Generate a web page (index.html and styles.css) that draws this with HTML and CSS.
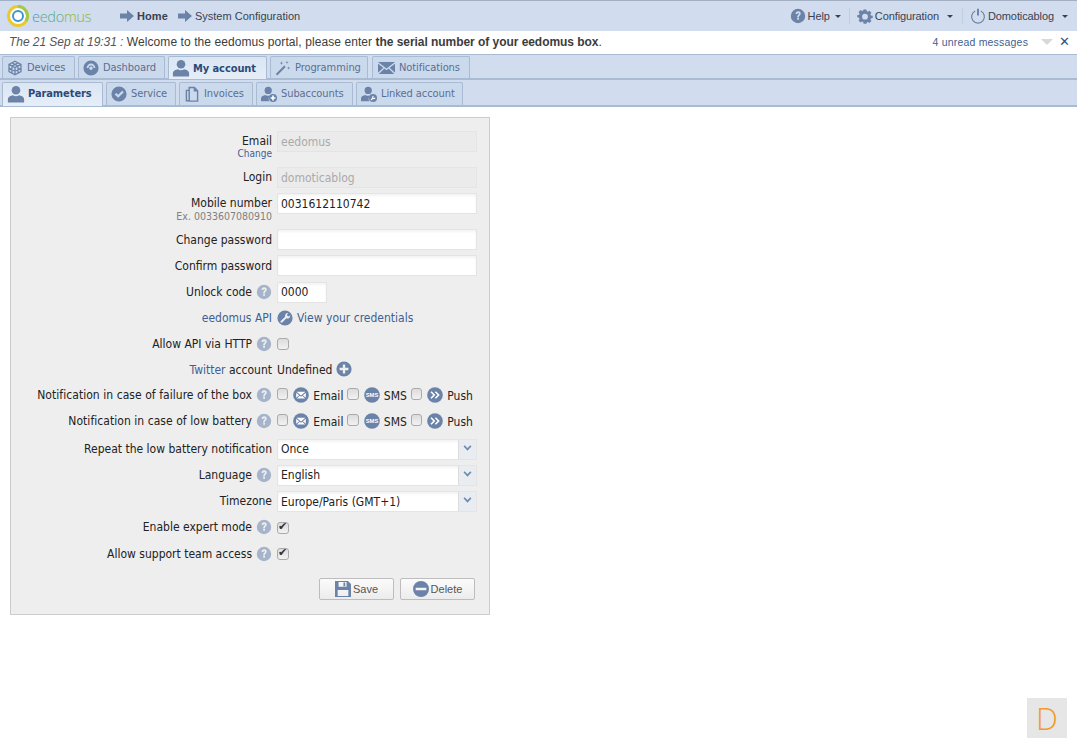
FILE: index.html
```html
<!DOCTYPE html>
<html lang="en">
<head>
  <meta charset="UTF-8">
  <title>eedomus - My account</title>
  <link rel="stylesheet" href="styles.css">
</head>
<body>
  <svg class="icon-defs" width="0" height="0">
    <symbol id="i-arrow" viewBox="0 0 14 12"><path d="M0 3.5h7V0l7 6-7 6V8.5H0z"/></symbol>
    <symbol id="i-help" viewBox="0 0 20 20"><path fill-rule="evenodd" d="M10 1a9 9 0 1 1 0 18 9 9 0 0 1 0-18zM7 7.6h2.2c.1-.9.4-1.3 1-1.3s.9.3.9.9c0 1.2-2.2 1.700-2.200 4.300h2.100c0-1.900 2.400-2.200 2.400-4.500 0-1.800-1.300-2.800-3.200-2.800C8.200 4.200 7 5.500 7 7.600zM9 12.300v2.300h2.200v-2.300z"/></symbol>
    <symbol id="i-gear" viewBox="0 0 20 20"><path fill-rule="evenodd" d="M8 1h4l.5 2.600 1.500.7 2.200-1.500 2.800 2.800-1.500 2.200.7 1.500 2.600.5v3l-2.600.7-.7 1.500 1.500 2.200-2.800 2.800-2.200-1.500-1.500.7L12 21H8l-.5-2.600-1.500-.7-2.200 1.500L1 16.400l1.500-2.200-.7-1.500L-.8 12V9l2.600-.5.700-1.500L1 4.600l2.800-2.800L6 3.300l1.500-.7zM10 7a4 4 0 1 0 0 8 4 4 0 0 0 0-8z" transform="translate(1 .9) scale(.9)"/></symbol>
    <symbol id="i-power" viewBox="0 0 20 20"><path fill="none" stroke="currentColor" stroke-width="1.500" d="M6.500 3.700a8 8 0 1 0 7 0"/><path d="M8.800 1h2.400v8.500H8.800z"/></symbol>
    <symbol id="i-cube" viewBox="0 0 20 20"><path fill="none" stroke="currentColor" stroke-width="1.600" d="M10 1.500l7.500 4v9l-7.500 4-7.500-4v-9zM2.500 5.500l7.500 4 7.500-4M10 9.500v9M6.200 3.500l7.500 4.100v9M13.800 3.500L6.200 7.600v9M2.500 10l7.500 4 7.500-4"/></symbol>
    <symbol id="i-dash" viewBox="0 0 20 20"><path fill-rule="evenodd" d="M10 .5a9.500 9.500 0 1 1 0 19 9.500 9.500 0 0 1 0-19zM10 4.500a5.500 5.500 0 0 0-5.500 5.500h2.300a3.200 3.200 0 0 1 6.400 0h2.300A5.500 5.500 0 0 0 10 4.500zM10 8a2.200 2.200 0 1 0 0 4.400A2.200 2.200 0 0 0 10 8z"/></symbol>
    <symbol id="i-person" viewBox="0 0 20 20"><circle cx="10" cy="5.800" r="4.800"/><path d="M1 19.500v-3.600c0-3 3-3.900 5.600-4.600 1 .8 2.100 1.200 3.400 1.200s2.400-.4 3.400-1.200c2.600.7 5.600 1.600 5.600 4.600v3.600z"/></symbol>
    <symbol id="i-wand" viewBox="0 0 20 20"><path d="M1 17.500L11.500 7l1.800 1.800L2.800 19.300z"/><path d="M8 1.500l.6 1.800 1.800.6-1.800.6L8 6.300l-.6-1.800-1.800-.6 1.800-.6zM15 1l.5 1.500L17 3l-1.500.5L15 5l-.5-1.500L13 3l1.500-.5zM17 8l.5 1.500 1.500.5-1.500.5L17 12l-.5-1.500L15 10l1.500-.5z"/></symbol>
    <symbol id="i-mail" viewBox="0 0 20 14"><path d="M0 0h20L10 7.500zM0 2v10.500L6.300 6.600zM20 2v10.500l-6.300-5.900zM7.500 7.500L10 9.500l2.500-2 6.500 6.500H1z"/></symbol>
    <symbol id="i-check" viewBox="0 0 20 20"><path fill-rule="evenodd" d="M10 .5a9.500 9.500 0 1 1 0 19 9.500 9.500 0 0 1 0-19zM14 5.800l-5 5.200-2.500-2.400-1.900 1.900L9 14.800l7-7.100z"/></symbol>
    <symbol id="i-pages" viewBox="0 0 20 20"><path fill="none" stroke="currentColor" stroke-width="1.800" d="M6.500 1.900H13l4 4v13H6.500zM13 2v4h4M6.500 5.500H3v13h3.500"/></symbol>
    <symbol id="i-person-plus" viewBox="0 0 20 20"><circle cx="9" cy="5.500" r="4.500"/><path d="M0 19v-3.500c0-2.800 3-3.700 5.500-4.300 1 .8 2.200 1.100 3.500 1.100s2.500-.3 3.500-1.100l1 .3c-2.400.5-4 2.500-4 4.500 0 1 .3 2.200 1 3z"/><circle cx="15" cy="15" r="5"/><path fill="#fff" d="M14 12h2v2h2v2h-2v2h-2v-2h-2v-2h2z"/></symbol>
    <symbol id="i-person-key" viewBox="0 0 20 20"><circle cx="9" cy="5.500" r="4.500"/><path d="M0 19v-3.500c0-2.800 3-3.700 5.500-4.300 1 .8 2.200 1.100 3.500 1.100s2.500-.3 3.500-1.100l1 .3c-2.400.5-4 2.500-4 4.500 0 1 .3 2.200 1 3z"/><circle cx="15" cy="15" r="5"/><path fill="none" stroke="#fff" stroke-width="1.500" d="M12.500 17.500l3-3M15.500 12.800a1.500 1.500 0 1 0 2 2"/></symbol>
    <symbol id="i-key" viewBox="0 0 20 20"><path fill-rule="evenodd" d="M10 .5a9.500 9.500 0 1 1 0 19 9.500 9.500 0 0 1 0-19zM13.500 3.800a3.500 3.500 0 0 0-3.300 4.600l-5.800 5.800v1.500h2.200l5-5.400a3.500 3.500 0 0 0 4.900-3.900L15 8.200l-2-.6-.5-2 1.800-1.700c-.3-.1-.5-.1-.8-.1z"/></symbol>
    <symbol id="i-plus" viewBox="0 0 20 20"><path fill-rule="evenodd" d="M10 .5a9.500 9.500 0 1 1 0 19 9.500 9.500 0 0 1 0-19zM8.500 4.500v4h-4v3h4v4h3v-4h4v-3h-4v-4z"/></symbol>
    <symbol id="i-circle-mail" viewBox="0 0 20 20"><circle cx="10" cy="10" r="9.800"/><path fill="#fff" d="M4.500 6h11L10 10.500zM4 7.300v6.200l3.700-3.200zM16 7.300v6.200l-3.700-3.200zM8.500 11l1.500 1.200 1.500-1.200 3.700 3.500H4.800z"/></symbol>
    <symbol id="i-circle-push" viewBox="0 0 20 20"><circle cx="10" cy="10" r="9.800"/><path fill="none" stroke="#fff" stroke-width="2" d="M5 6l4 4-4 4M10.500 6l4 4-4 4"/></symbol>
    <symbol id="i-save" viewBox="0 0 18 18"><path fill-rule="evenodd" d="M0 0h14.500L18 3.500V18H0zM4 1v5.500h9V1zM9.500 1.800h2v4h-2zM3 10v7h12v-7z"/></symbol>
    <symbol id="i-minus" viewBox="0 0 18 18"><path fill-rule="evenodd" d="M9 0a9 9 0 1 1 0 18A9 9 0 0 1 9 0zM3 7.500v3h12v-3z"/></symbol>
  </svg>

  <header class="topbar">
    <a class="logo">
      <svg class="logo-mark" viewBox="0 0 22 22" width="22" height="22">
        <circle cx="11" cy="11" r="9.500" fill="#fff" stroke="#e9c92c" stroke-width="3"/>
        <path d="M11 1.500a9.500 9.500 0 0 1 8 14.500" fill="none" stroke="#a3c94a" stroke-width="3"/>
        <circle cx="11" cy="11" r="5" fill="#fff" stroke="#3f95d4" stroke-width="2"/>
      </svg>
      <span class="logo-text"><span class="logo-e">e</span><span class="logo-d">edo</span><span class="logo-m">mus</span></span>
    </a>
    <nav class="crumbs">
      <svg class="ico-arrow"><use href="#i-arrow"/></svg>
      <b>Home</b>
      <svg class="ico-arrow arrow-next"><use href="#i-arrow"/></svg>
      <span>System Configuration</span>
    </nav>
    <div class="top-menu">
      <span class="menu-item"><svg class="ico-16"><use href="#i-help"/></svg>Help<i class="caret"></i></span>
      <span class="menu-item menu-config"><svg class="ico-16"><use href="#i-gear"/></svg>Configuration<i class="caret"></i></span>
      <span class="menu-item menu-user"><svg class="ico-16"><use href="#i-power"/></svg>Domoticablog<i class="caret"></i></span>
    </div>
  </header>

  <div class="msgbar">
    <p class="msg"><em>The 21 Sep at 19:31 :</em> Welcome to the eedomus portal, please enter <strong>the serial number of your eedomus box</strong>.</p>
    <a class="unread">4 unread messages</a>
    <i class="msg-down"></i>
    <span class="msg-close">✕</span>
  </div>

  <div class="tabs">
    <a class="tab tab-devices"><svg class="ico-16"><use href="#i-cube"/></svg>Devices</a>
    <a class="tab tab-dash"><svg class="ico-16"><use href="#i-dash"/></svg>Dashboard</a>
    <a class="tab tab-account active"><svg class="ico-18"><use href="#i-person"/></svg>My account</a>
    <a class="tab tab-prog"><svg class="ico-16"><use href="#i-wand"/></svg>Programming</a>
    <a class="tab tab-notif"><svg class="ico-mail"><use href="#i-mail"/></svg>Notifications</a>
  </div>
  <div class="tabs subtabs">
    <a class="tab tab-params active"><svg class="ico-18"><use href="#i-person"/></svg>Parameters</a>
    <a class="tab tab-service"><svg class="ico-16"><use href="#i-check"/></svg>Service</a>
    <a class="tab tab-invoices"><svg class="ico-16"><use href="#i-pages"/></svg>Invoices</a>
    <a class="tab tab-sub"><svg class="ico-16"><use href="#i-person-plus"/></svg>Subaccounts</a>
    <a class="tab tab-linked"><svg class="ico-16"><use href="#i-person-key"/></svg>Linked account</a>
  </div>

  <form class="panel">
    <div class="row row-tall">
      <div class="label">Email<a class="sub-link">Change</a></div>
      <input class="field" value="eedomus" disabled>
    </div>
    <div class="row">
      <div class="label">Login</div>
      <input class="field" value="domoticablog" disabled>
    </div>
    <div class="row row-tall">
      <div class="label">Mobile number<small class="sub-note">Ex. 0033607080910</small></div>
      <input class="field" value="0031612110742">
    </div>
    <div class="row row-low">
      <div class="label">Change password</div>
      <input class="field" type="password">
    </div>
    <div class="row row-low">
      <div class="label">Confirm password</div>
      <input class="field" type="password">
    </div>
    <div class="row">
      <div class="label">Unlock code<svg class="q"><use href="#i-help"/></svg></div>
      <input class="field field-short" value="0000">
    </div>
    <div class="row">
      <div class="label"><a class="link">eedomus API</a></div>
      <div class="inline"><svg class="round"><use href="#i-key"/></svg><a class="link creds">View your credentials</a></div>
    </div>
    <div class="row">
      <div class="label">Allow API via HTTP<svg class="q"><use href="#i-help"/></svg></div>
      <div class="inline"><input class="check" type="checkbox"></div>
    </div>
    <div class="row row-twitter">
      <div class="label"><a class="link">Twitter</a> account</div>
      <div class="inline">Undefined<svg class="round plus"><use href="#i-plus"/></svg></div>
    </div>
    <div class="row row-notif">
      <div class="label">Notification in case of failure of the box<svg class="q"><use href="#i-help"/></svg></div>
      <div class="inline channels">
        <input class="check" type="checkbox"><svg class="round"><use href="#i-circle-mail"/></svg><span>Email</span>
        <input class="check" type="checkbox"><svg class="round" viewBox="0 0 18 18"><circle cx="9" cy="9" r="8.800"/><text x="9" y="11.200" class="sms-text">SMS</text></svg><span>SMS</span>
        <input class="check" type="checkbox"><svg class="round"><use href="#i-circle-push"/></svg><span>Push</span>
      </div>
    </div>
    <div class="row row-notif">
      <div class="label">Notification in case of low battery<svg class="q"><use href="#i-help"/></svg></div>
      <div class="inline channels">
        <input class="check" type="checkbox"><svg class="round"><use href="#i-circle-mail"/></svg><span>Email</span>
        <input class="check" type="checkbox"><svg class="round" viewBox="0 0 18 18"><circle cx="9" cy="9" r="8.800"/><text x="9" y="11.200" class="sms-text">SMS</text></svg><span>SMS</span>
        <input class="check" type="checkbox"><svg class="round"><use href="#i-circle-push"/></svg><span>Push</span>
      </div>
    </div>
    <div class="row">
      <div class="label">Repeat the low battery notification</div>
      <div class="select"><span>Once</span><i class="select-btn"></i></div>
    </div>
    <div class="row">
      <div class="label">Language<svg class="q"><use href="#i-help"/></svg></div>
      <div class="select"><span>English</span><i class="select-btn"></i></div>
    </div>
    <div class="row">
      <div class="label">Timezone</div>
      <div class="select"><span>Europe/Paris (GMT+1)</span><i class="select-btn"></i></div>
    </div>
    <div class="row">
      <div class="label">Enable expert mode<svg class="q"><use href="#i-help"/></svg></div>
      <div class="inline"><input class="check" type="checkbox" checked></div>
    </div>
    <div class="row row-low">
      <div class="label">Allow support team access<svg class="q"><use href="#i-help"/></svg></div>
      <div class="inline"><input class="check" type="checkbox" checked></div>
    </div>
    <div class="actions">
      <button class="btn" type="button"><svg class="ico-btn"><use href="#i-save"/></svg>Save</button>
      <button class="btn" type="button"><svg class="ico-btn"><use href="#i-minus"/></svg>Delete</button>
    </div>
  </form>

  <div class="corner-badge">D</div>
</body>
</html>
```

FILE: styles.css
```css
* {
  margin: 0;
  padding: 0;
  box-sizing: border-box;
}

html, body {
  height: 100%;
}

body {
  position: relative;
  background: #fff;
  color: #222;
  font-family: "Liberation Sans", Arial, sans-serif;
  font-size: 12px;
  overflow: hidden;
}

.icon-defs {
  position: absolute;
}

svg {
  fill: #6b83a8;
  color: #6b83a8;
  flex: none;
}

/* top bar */
.topbar {
  height: 31px;
  display: flex;
  align-items: center;
  background: #d1ddee;
  border-top: 1px solid #a3afc2;
}

.logo {
  display: flex;
  align-items: center;
  margin-left: 7px;
  width: 113px;
}

.logo-text {
  margin-left: 3px;
  font-family: "Open Sans", sans-serif;
  font-size: 14.500px;
  font-weight: 300;
  letter-spacing: -0.3px;
}

.logo-e { color: #3f9cd6; }
.logo-d { color: #55ad8a; }
.logo-m { color: #8fb52c; }

.crumbs {
  display: flex;
  align-items: center;
  font-size: 11px;
  color: #3a4252;
}

.crumbs b {
  margin-left: 3px;
  letter-spacing: 0.1px;
}

.crumbs span {
  margin-left: 3px;
}

.ico-arrow {
  width: 14px;
  height: 12px;
}

.arrow-next {
  margin-left: 10px;
}

.top-menu {
  display: flex;
  align-items: center;
  margin-left: auto;
  margin-right: 9px;
  font-size: 11px;
  letter-spacing: -0.1px;
  color: #3a4252;
}

.menu-item {
  display: flex;
  align-items: center;
  gap: 2px;
}

.menu-config, .menu-user {
  padding-left: 7px;
  border-left: 1px solid #bfcde2;
}

.menu-config {
  margin-left: 8px;
}

.menu-user {
  margin-left: 9px;
}

.caret {
  width: 0;
  height: 0;
  margin-left: 3px;
  border: 3px solid transparent;
  border-top: 3px solid #3a4252;
  border-bottom: 0;
}

.menu-config .caret, .menu-user .caret {
  margin-left: 6px;
}

.ico-16 {
  width: 16px;
  height: 16px;
}

.ico-18 {
  width: 18px;
  height: 18px;
}

.ico-mail {
  width: 17px;
  height: 12px;
}

/* message bar */
.msgbar {
  height: 24px;
  display: flex;
  align-items: center;
  padding: 0 7px 1px 9px;
  background: #fff;
  border-bottom: 1px solid #a9bad3;
}

.msg {
  color: #3c3c3c;
  flex: 1;
  letter-spacing: 0.08px;
}

.msg em {
  color: #555;
  letter-spacing: -0.05px;
}

.msg strong {
  letter-spacing: -0.05px;
}

.unread {
  font-size: 10.500px;
  color: #3f5f92;
  letter-spacing: 0.2px;
}

.msg-down {
  width: 0;
  height: 0;
  margin-left: 13px;
  border: 6px solid transparent;
  border-top: 6px solid #d8d8d8;
  border-bottom: 0;
}

.msg-close {
  margin-left: 6px;
  font-family: "DejaVu Sans", sans-serif;
  font-size: 13px;
  line-height: 14px;
  color: #2f5585;
}

/* tabs */
.tabs {
  height: 24px;
  display: flex;
  align-items: flex-end;
  gap: 3px;
  padding: 0 0 0 2px;
  background: #d1ddee;
  border-bottom: 1px solid #a9bad3;
}

.subtabs {
  height: 28px;
  padding-top: 2px;
  border-top: 1px solid #a9bad3;
  border-bottom: 2px solid #a9bad3;
}

.tab {
  height: 22px;
  display: flex;
  align-items: center;
  gap: 4px;
  padding-left: 4px;
  font-family: "DejaVu Sans Condensed", "DejaVu Sans", sans-serif;
  font-size: 11px;
  letter-spacing: -0.08px;
  color: #5a6f90;
  background: #cbd9ec;
  border: 1px solid #a9bad3;
  border-bottom: 0;
  border-radius: 2px 2px 0 0;
}

.tab.active {
  height: 23px;
  margin-bottom: -1px;
  gap: 3px;
  font-weight: 700;
  color: #2d4a77;
  background: linear-gradient(#dbe6f3, #e6eef8);
}

.tab-devices { width: 73px; }
.tab-dash { width: 87px; }
.tab-account { width: 99px; padding-left: 3px; }
.tab-prog { width: 98px; }
.tab-notif { width: 98px; margin-left: 1px; padding-left: 5px; }
.tab-params { width: 101px; }
.tab-service { width: 70px; }
.tab-invoices { width: 74px; }
.tab-sub { width: 97px; }
.tab-linked { width: 107px; }

.subtabs .tab {
  height: 23px;
  padding-bottom: 1px;
}

.subtabs .tab.active {
  height: 24px;
  padding-bottom: 2px;
}

/* form */
.panel {
  width: 480px;
  height: 498px;
  margin: 10px 0 0 10px;
  padding: 13px 12px 0 0;
  background: #eee;
  border: 1px solid #ccc;
}

.row {
  height: 26.200px;
  display: grid;
  grid-template-columns: 261px 200px;
  column-gap: 5px;
  align-items: start;
  font-family: "DejaVu Sans Condensed", "DejaVu Sans", sans-serif;
}

.row-tall {
  height: 36px;
}

.row-low .label {
  padding-top: 1px;
}

.row-twitter {
  height: 25px;
}

.row-twitter .inline {
  margin-top: -1px;
}

.row-notif {
  height: 26px;
  letter-spacing: 0.05px;
}

.row-notif + .row-notif {
  height: 27.600px;
}

.label {
  line-height: 21px;
  text-align: right;
  color: #222;
  white-space: nowrap;
}

.sub-link, .sub-note {
  display: block;
  margin-top: -4px;
  line-height: 12px;
  font-size: 10px;
}

.sub-link {
  color: #3f5f92;
}

.sub-note {
  font-size: 10.500px;
  color: #808080;
}

.q {
  width: 16px;
  height: 16px;
  margin-left: 4px;
  vertical-align: -4px;
  fill: #a6b4cb;
  color: #a6b4cb;
}

.field {
  width: 200px;
  height: 21px;
  padding: 0 3px;
  font: inherit;
  color: #222;
  background: #fff;
  border: 1px solid #e4e4e4;
  box-shadow: inset 0 2px 3px rgba(0, 0, 0, 0.05);
  outline: none;
}

.field:disabled {
  color: #aaa;
  background: #ebebeb;
  box-shadow: none;
}

.field-short {
  width: 50px;
}

.inline {
  height: 21px;
  display: flex;
  align-items: center;
}

.round {
  width: 16px;
  height: 16px;
}

.creds {
  margin-left: 4px;
}

.plus {
  margin-left: 4px;
  margin-top: -1px;
}

.link {
  color: #3f5f92;
}

.check {
  appearance: none;
  position: relative;
  width: 12px;
  height: 12px;
  background: linear-gradient(#dcdcdc, #f2f2f2);
  border: 1px solid #aaa;
  border-radius: 3px;
}

.check:checked::after {
  content: "✔";
  position: absolute;
  left: 0;
  top: -3px;
  font-family: "DejaVu Sans", sans-serif;
  font-size: 11px;
  color: #333;
}

.channels {
  white-space: nowrap;
}

.channels .check {
  margin-top: -3px;
}

.channels .round {
  margin-left: 5px;
  margin-top: -1px;
}

.channels span {
  margin: 0 4px;
}

.sms-text {
  fill: #fff;
  font-family: "Liberation Sans", sans-serif;
  font-size: 6.500px;
  font-weight: 700;
  text-anchor: middle;
}

.select {
  height: 21px;
  display: flex;
  align-items: center;
  justify-content: space-between;
  padding-left: 3px;
  background: #fff;
  border: 1px solid #e4e4e4;
  box-shadow: inset 0 2px 3px rgba(0, 0, 0, 0.05);
}

.select-btn {
  position: relative;
  width: 18px;
  height: 19px;
  background: #e9ecf0;
  border-left: 1px solid #dcdcdc;
}

.select-btn::after {
  content: "";
  position: absolute;
  left: 5px;
  top: 3px;
  width: 5px;
  height: 5px;
  border-right: 2px solid #6a8cb0;
  border-bottom: 2px solid #6a8cb0;
  transform: rotate(45deg) scale(0.8);
}

.actions {
  display: flex;
  justify-content: flex-end;
  gap: 6px;
  margin-top: 8px;
  padding-right: 2px;
}

.btn {
  width: 75px;
  height: 22px;
  display: flex;
  align-items: center;
  justify-content: center;
  gap: 2px;
  font-family: "Liberation Sans", sans-serif;
  font-size: 11px;
  color: #555;
  background: linear-gradient(#fbfbfb, #ececec);
  border: 1px solid #bdbdbd;
  border-radius: 2px;
}

.ico-btn {
  width: 16px;
  height: 16px;
}

.corner-badge {
  position: absolute;
  right: 10px;
  bottom: 10px;
  width: 40px;
  height: 40px;
  display: flex;
  align-items: center;
  justify-content: center;
  font-family: "Open Sans", sans-serif;
  font-size: 31px;
  font-weight: 300;
  color: #f29a2e;
  background: #e6e6e6;
}
```
